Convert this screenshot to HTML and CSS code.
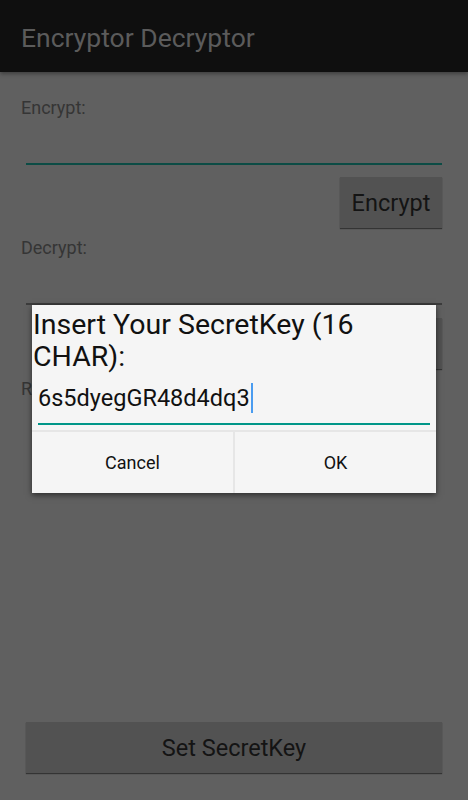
FILE: index.html
```html
<!DOCTYPE html>
<html lang="en">
<head>
    <meta charset="UTF-8">
    <meta name="viewport" content="width=device-width, initial-scale=1.0">
    <title>Encryptor Decryptor</title>
    <link rel="stylesheet" href="styles.css">
</head>
<body>
    <header class="action-bar">
        <div class="app-title">Encryptor Decryptor</div>
    </header>

    <main class="content">
        <div class="label">Encrypt:</div>
        <div class="field field-active"></div>
        <div class="btn-row">
            <button class="btn">Encrypt</button>
        </div>

        <div class="label label-gap">Decrypt:</div>
        <div class="field"></div>
        <div class="btn-row btn-row-low">
            <button class="btn">Decrypt</button>
        </div>

        <div class="label label-gap">Result:</div>

        <div class="spacer"></div>
        <button class="btn btn-wide">Set SecretKey</button>
    </main>

    <div class="dialog">
        <div class="dialog-title">Insert Your SecretKey (16 CHAR):</div>
        <div class="dialog-input"><span>6s5dyegGR48d4dq3</span><i class="cursor"></i></div>
        <div class="dialog-buttons">
            <button class="dialog-btn">Cancel</button>
            <button class="dialog-btn">OK</button>
        </div>
    </div>
</body>
</html>
```

FILE: styles.css
```css
html, body {
    height: 100%;
}

body {
    margin: 0;
    font-family: Roboto, "Noto Sans", sans-serif;
    background-color: #606060;
    display: flex;
    flex-direction: column;
    overflow: hidden;
}

.action-bar {
    height: 72px;
    background-color: #0f0f0f;
    display: flex;
    align-items: center;
    padding-left: 21px;
    box-shadow: 0 2px 4px rgba(0, 0, 0, 0.35);
    position: relative;
    z-index: 1;
}

.app-title {
    color: #5b5b5b;
    font-size: 26.5px;
    margin-top: 2px;
}

.content {
    flex: 1;
    display: flex;
    flex-direction: column;
    padding: 26px 26px 27px 21px;
}

.label {
    color: #353535;
    font-size: 18px;
    line-height: 19px;
}

.label-gap {
    margin-top: 10px;
}

.field {
    height: 46px;
    margin-left: 5px;
    border-bottom: 2px solid #3c3c3c;
}

.field-active {
    border-bottom-color: #0c4c45;
}

.btn-row {
    display: flex;
    justify-content: flex-end;
    margin-top: 12px;
}

.btn-row-low {
    margin-top: 13px;
}

.btn {
    height: 51px;
    width: 102px;
    border: none;
    background-color: #525252;
    color: #141414;
    font-family: Roboto, "Noto Sans", sans-serif;
    font-size: 23.5px;
    box-shadow: 0 1px 1px rgba(0, 0, 0, 0.45);
    padding: 0;
}

.spacer {
    flex: 1;
}

.btn-wide {
    width: auto;
    margin-left: 5px;
}

.dialog {
    position: absolute;
    left: 32px;
    top: 305px;
    width: 404px;
    background-color: #f5f5f5;
    box-shadow: 0 2px 6px rgba(0, 0, 0, 0.55);
    display: flex;
    flex-direction: column;
}

.dialog-title {
    color: #111;
    font-size: 28.5px;
    line-height: 32px;
    padding: 4px 8px 0 1px;
}

.dialog-input {
    margin: 0 6px;
    height: 50px;
    border-bottom: 2px solid #009688;
    display: flex;
    align-items: center;
    font-size: 23.5px;
    color: #111;
}

.cursor {
    display: inline-block;
    width: 2px;
    height: 30px;
    background-color: #4a9cf0;
    margin-left: 1px;
}

.dialog-buttons {
    margin-top: 5px;
    border-top: 2px solid #e6e6e6;
    display: flex;
}

.dialog-btn {
    flex: 1;
    height: 61px;
    border: none;
    background: none;
    font-family: Roboto, "Noto Sans", sans-serif;
    font-size: 18px;
    color: #111;
    padding: 0;
}

.dialog-btn + .dialog-btn {
    border-left: 2px solid #e6e6e6;
}
```
